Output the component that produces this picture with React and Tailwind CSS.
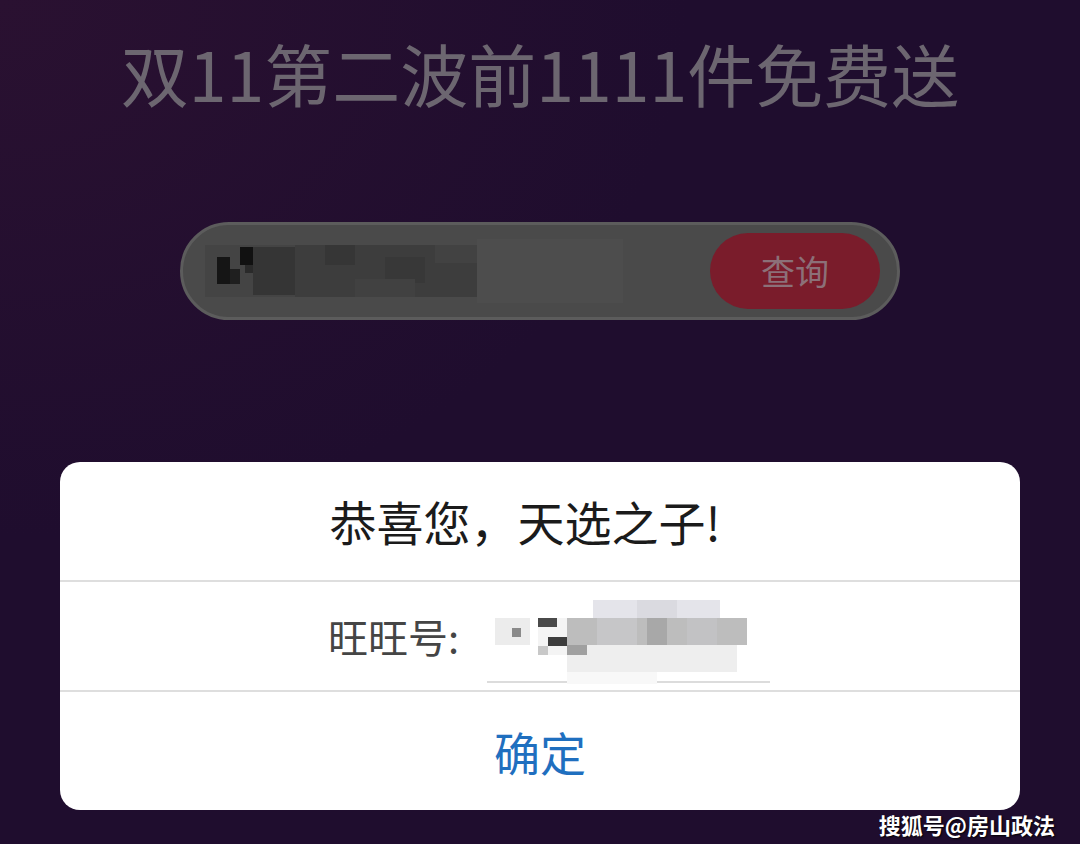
const cjk = { fontFamily: '"Noto Sans CJK SC", "Noto Sans", sans-serif' };

const BarMosaic = () => (
  <svg width="420" height="64" viewBox="0 0 420 64" className="shrink-0">
    <rect x="272" y="0" width="146" height="64" fill="#4d4d4d" />
    <rect x="0" y="6" width="90" height="52" fill="#444" />
    <rect x="90" y="6" width="182" height="52" fill="#3d3d3d" />
    <rect x="120" y="6" width="30" height="20" fill="#363636" />
    <rect x="180" y="18" width="40" height="26" fill="#383838" />
    <rect x="230" y="6" width="42" height="18" fill="#424242" />
    <rect x="150" y="40" width="60" height="18" fill="#414141" />
    <rect x="12" y="18" width="13" height="27" fill="#151515" />
    <rect x="25" y="30" width="10" height="15" fill="#1f1f1f" />
    <rect x="35" y="8" width="13" height="18" fill="#111" />
    <rect x="40" y="26" width="8" height="8" fill="#2a2a2a" />
    <rect x="48" y="8" width="42" height="48" fill="#353535" />
  </svg>
);

const IdMosaic = () => (
  <svg width="285" height="90" viewBox="0 0 285 90" className="shrink-0">
    <rect x="106" y="4" width="127" height="20" fill="#e4e4ea" />
    <rect x="150" y="4" width="40" height="20" fill="#dadae0" />
    <rect x="8" y="22" width="35" height="27" fill="#ececec" />
    <rect x="25" y="32" width="9" height="9" fill="#8a8a8a" />
    <rect x="51" y="22" width="29" height="37" fill="#f4f4f4" />
    <rect x="51" y="22" width="19" height="9" fill="#4a4a4a" />
    <rect x="61" y="41" width="19" height="9" fill="#3d3d3d" />
    <rect x="51" y="50" width="10" height="9" fill="#c8c8c8" />
    <rect x="80" y="22" width="180" height="27" fill="#bdbdbd" />
    <rect x="110" y="22" width="40" height="27" fill="#c6c6c8" />
    <rect x="160" y="22" width="20" height="27" fill="#a8a8a8" />
    <rect x="200" y="22" width="30" height="27" fill="#c2c2c4" />
    <rect x="80" y="49" width="170" height="27" fill="#eeeeee" />
    <rect x="80" y="49" width="20" height="10" fill="#a0a0a0" />
    <rect x="0" y="85" width="283" height="2" fill="#dcdcdc" />
    <rect x="80" y="76" width="90" height="12" fill="#f8f8f8" />
  </svg>
);

export default function App() {
  return (
    <div
      className="relative w-[1080px] h-[844px] overflow-hidden bg-[#1f0d2e] bg-[radial-gradient(ellipse_at_top_left,#2a1131_0%,#1f0d2e_45%)] flex flex-col items-center"
      style={cjk}
    >
      <h1 className="mt-[39px] text-[68px] leading-none font-normal text-[#6c6670]">
        双11第二波前1111件免费送
      </h1>

      <div className="mt-[115px] w-[720px] h-[98px] rounded-full bg-[#4a4a4a] border-[3px] border-[#5c5c5c] flex items-center pl-[22px] pr-[17px]">
        <BarMosaic />
        <div className="flex-1" />
        <button className="w-[170px] h-[76px] rounded-full bg-[#7a1c2b] text-[#8c7078] text-[34px] leading-none">
          查询
        </button>
      </div>

      <div className="mt-[142px] w-[960px] rounded-[20px] bg-white flex flex-col">
        <div className="h-[118px] flex items-center justify-center pr-[30px] text-[47px] text-[#1b1b1b]">
          恭喜您，天选之子!
        </div>
        <div className="h-[110px] border-t-2 border-[#dedede] flex items-center pl-[268px]">
          <span className="text-[40px] text-[#454545] leading-none">旺旺号:</span>
          <div className="ml-[28px] mt-[10px]">
            <IdMosaic />
          </div>
        </div>
        <div className="h-[120px] border-t-2 border-[#dedede] flex items-center justify-center text-[46px] text-[#1f6fbf]">
          确定
        </div>
      </div>

      <div className="absolute right-[25px] bottom-[9px] text-[22px] leading-none font-bold text-white [text-shadow:1px_1px_2px_#000]">
        搜狐号@房山政法
      </div>
    </div>
  );
}
